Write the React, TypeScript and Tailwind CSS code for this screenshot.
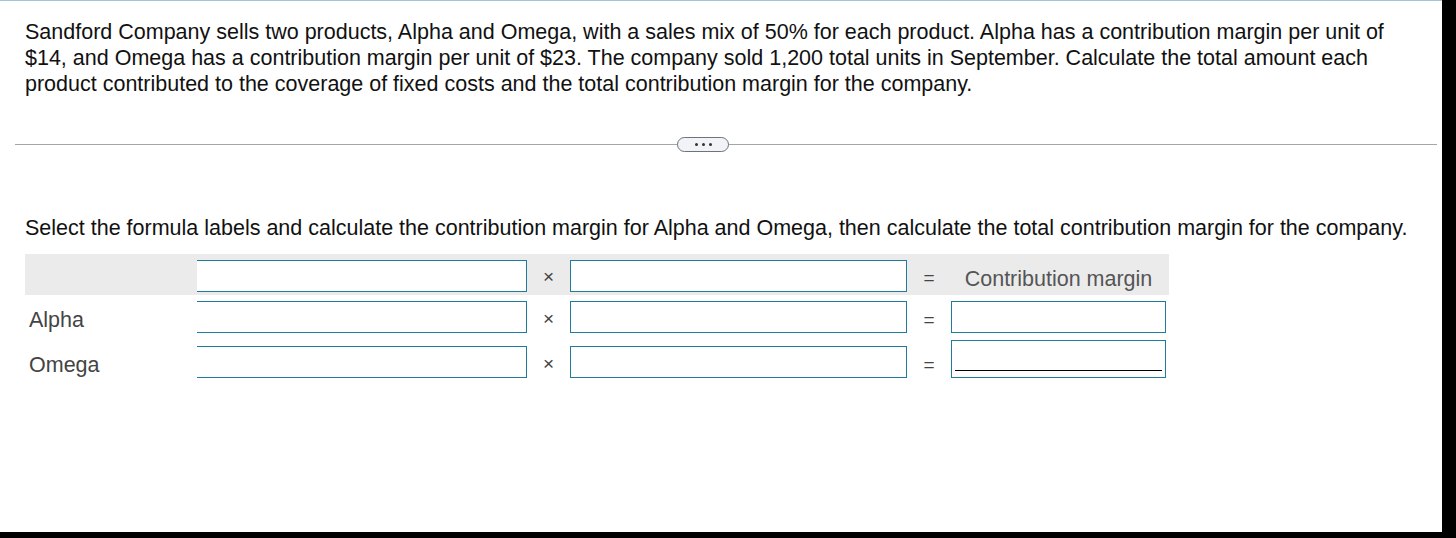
import React from 'react';

const font = { fontFamily: '"Liberation Sans", Arial, sans-serif' };

function Box({ w, h = 'h-[32px]', noLeft = false, line = false }: { w: string; h?: string; noLeft?: boolean; line?: boolean }) {
    return (
        <div className={`${w} ${h} shrink-0 bg-white border border-[#1f7c9c] ${noLeft ? 'border-l-0' : ''} flex items-end px-[3px] pb-[6px]`}>
            {line && <div className="w-full h-[1px] bg-black" />}
        </div>
    );
}

function Op({ sign, w, pt }: { sign: string; w: string; pt: string }) {
    return (
        <div className={`${w} h-[32px] shrink-0 flex justify-center text-[#444] text-[19px] leading-[26px] ${pt}`}>{sign}</div>
    );
}

export default function App() {
    return (
        <div className="w-[1456px] h-[538px] bg-black flex flex-col overflow-hidden" style={font}>
            <div className="flex h-[532px]">
                <div className="w-[1442px] h-full bg-white border-t border-[#a3c4d8] flex flex-col">
                    {/* Problem statement */}
                    <p className="pl-[25px] pr-[20px] pt-[18px] text-[21.5px] leading-[26px] text-[#111]">
                        Sandford Company sells two products, Alpha and Omega, with a sales mix of 50% for each product. Alpha has a contribution margin per unit of $14, and Omega has a contribution margin per unit of $23. The company sold 1,200 total units in September. Calculate the total amount each product contributed to the coverage of fixed costs and the total contribution margin for the company.
                    </p>

                    {/* Divider with expand pill */}
                    <div className="relative mt-[47px] ml-[15px] w-[1422px] h-[1px] bg-[#a2a6ab]">
                        <div className="absolute left-[662px] top-[-7px] w-[52px] h-[15px] rounded-full border border-[#6b7280] bg-[#f1f3f6] flex items-center justify-center gap-[4px]">
                            <span className="w-[3px] h-[3px] rounded-full bg-[#333]" />
                            <span className="w-[3px] h-[3px] rounded-full bg-[#333]" />
                            <span className="w-[3px] h-[3px] rounded-full bg-[#333]" />
                        </div>
                    </div>

                    {/* Instructions */}
                    <p className="pl-[25px] mt-[70px] text-[21.5px] leading-[26px] text-[#111]">
                        Select the formula labels and calculate the contribution margin for Alpha and Omega, then calculate the total contribution margin for the company.
                    </p>

                    {/* Formula table */}
                    <div className="ml-[25px] mt-[13px] w-[1144px] flex flex-col text-[21.5px] text-[#444]">
                        <div className="h-[41px] bg-[#ebebeb] flex items-start pt-[6px]">
                            <div className="w-[172px] shrink-0" />
                            <Box w="w-[330px]" noLeft />
                            <Op sign="×" w="w-[43px]" pt="pt-[4px]" />
                            <Box w="w-[337px]" />
                            <Op sign="=" w="w-[44px]" pt="pt-[5px]" />
                            <div className="w-[215px] h-[32px] shrink-0 flex justify-center pt-[6px] leading-[26px] text-[#555] whitespace-nowrap">Contribution margin</div>
                        </div>
                        <div className="flex items-end mt-[6px]">
                            <div className="w-[172px] h-[32px] shrink-0 pl-[4px] pt-[6px] leading-[26px]">Alpha</div>
                            <Box w="w-[330px]" noLeft />
                            <Op sign="×" w="w-[43px]" pt="pt-[5px]" />
                            <Box w="w-[337px]" />
                            <Op sign="=" w="w-[44px]" pt="pt-[6px]" />
                            <Box w="w-[215px]" />
                        </div>
                        <div className="flex items-end mt-[7px]">
                            <div className="w-[172px] h-[32px] shrink-0 pl-[4px] pt-[6px] leading-[26px]">Omega</div>
                            <Box w="w-[330px]" noLeft />
                            <Op sign="×" w="w-[43px]" pt="pt-[5px]" />
                            <Box w="w-[337px]" />
                            <Op sign="=" w="w-[44px]" pt="pt-[6px]" />
                            <Box w="w-[215px]" h="h-[38px]" line />
                        </div>
                    </div>
                </div>
                <div className="w-[14px] h-full bg-black" />
            </div>
            <div className="h-[6px] bg-black" />
        </div>
    );
}
